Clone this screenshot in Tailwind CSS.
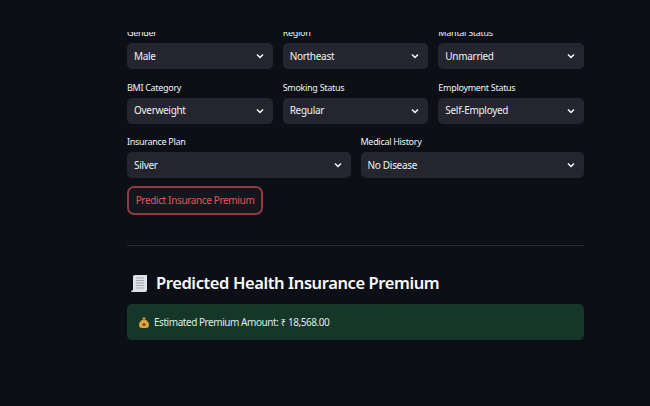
<!DOCTYPE html>
<html lang="en">
<head>
  <meta charset="UTF-8" />
  <title>Health Insurance Premium</title>
  <script src="https://cdn.jsdelivr.net/npm/@tailwindcss/browser@4"></script>
</head>
<body class="bg-[#0c0f15] h-[406px] overflow-hidden font-['Noto_Sans','Lato',sans-serif] text-[#f2f2f2]">
  <main class="w-[457px] ml-[127px] pt-[32px]">
    <div class="h-[374px] overflow-hidden">
      <div class="-mt-[7px] flex flex-col gap-[10.500px]">
        <div class="flex gap-[10px]">
          <div class="flex-1">
            <label class="block h-[18px] leading-[15px] text-[9px] tracking-[-0.3px]">Gender</label>
            <div class="flex items-center justify-between h-[26px] px-[7px] rounded-[5px] bg-[#24252e] text-[10px] tracking-[-0.3px]">
              <span>Male</span>
              <svg class="w-[10px] h-[10px] mr-[1px]" viewBox="0 0 10 10" fill="none" stroke="#fafafa" stroke-width="1.500"><path d="M2 3.500 5 6.500 8 3.500" /></svg>
            </div>
          </div>
          <div class="flex-1">
            <label class="block h-[18px] leading-[15px] text-[9px] tracking-[-0.3px]">Region</label>
            <div class="flex items-center justify-between h-[26px] px-[7px] rounded-[5px] bg-[#24252e] text-[10px] tracking-[-0.3px]">
              <span>Northeast</span>
              <svg class="w-[10px] h-[10px] mr-[1px]" viewBox="0 0 10 10" fill="none" stroke="#fafafa" stroke-width="1.500"><path d="M2 3.500 5 6.500 8 3.500" /></svg>
            </div>
          </div>
          <div class="flex-1">
            <label class="block h-[18px] leading-[15px] text-[9px] tracking-[-0.3px]">Marital Status</label>
            <div class="flex items-center justify-between h-[26px] px-[7px] rounded-[5px] bg-[#24252e] text-[10px] tracking-[-0.3px]">
              <span>Unmarried</span>
              <svg class="w-[10px] h-[10px] mr-[1px]" viewBox="0 0 10 10" fill="none" stroke="#fafafa" stroke-width="1.500"><path d="M2 3.500 5 6.500 8 3.500" /></svg>
            </div>
          </div>
        </div>
        <div class="flex gap-[10px]">
          <div class="flex-1">
            <label class="block h-[18px] leading-[15px] text-[9px] tracking-[-0.3px]">BMI Category</label>
            <div class="flex items-center justify-between h-[26px] px-[7px] rounded-[5px] bg-[#24252e] text-[10px] tracking-[-0.3px]">
              <span>Overweight</span>
              <svg class="w-[10px] h-[10px] mr-[1px]" viewBox="0 0 10 10" fill="none" stroke="#fafafa" stroke-width="1.500"><path d="M2 3.500 5 6.500 8 3.500" /></svg>
            </div>
          </div>
          <div class="flex-1">
            <label class="block h-[18px] leading-[15px] text-[9px] tracking-[-0.3px]">Smoking Status</label>
            <div class="flex items-center justify-between h-[26px] px-[7px] rounded-[5px] bg-[#24252e] text-[10px] tracking-[-0.3px]">
              <span>Regular</span>
              <svg class="w-[10px] h-[10px] mr-[1px]" viewBox="0 0 10 10" fill="none" stroke="#fafafa" stroke-width="1.500"><path d="M2 3.500 5 6.500 8 3.500" /></svg>
            </div>
          </div>
          <div class="flex-1">
            <label class="block h-[18px] leading-[15px] text-[9px] tracking-[-0.3px]">Employment Status</label>
            <div class="flex items-center justify-between h-[26px] px-[7px] rounded-[5px] bg-[#24252e] text-[10px] tracking-[-0.3px]">
              <span>Self-Employed</span>
              <svg class="w-[10px] h-[10px] mr-[1px]" viewBox="0 0 10 10" fill="none" stroke="#fafafa" stroke-width="1.500"><path d="M2 3.500 5 6.500 8 3.500" /></svg>
            </div>
          </div>
        </div>
        <div class="flex gap-[10px]">
          <div class="flex-1">
            <label class="block h-[18px] leading-[15px] text-[9px] tracking-[-0.3px]">Insurance Plan</label>
            <div class="flex items-center justify-between h-[26px] px-[7px] rounded-[5px] bg-[#24252e] text-[10px] tracking-[-0.3px]">
              <span>Silver</span>
              <svg class="w-[10px] h-[10px] mr-[1px]" viewBox="0 0 10 10" fill="none" stroke="#fafafa" stroke-width="1.500"><path d="M2 3.500 5 6.500 8 3.500" /></svg>
            </div>
          </div>
          <div class="flex-1">
            <label class="block h-[18px] leading-[15px] text-[9px] tracking-[-0.3px]">Medical History</label>
            <div class="flex items-center justify-between h-[26px] px-[7px] rounded-[5px] bg-[#24252e] text-[10px] tracking-[-0.3px]">
              <span>No Disease</span>
              <svg class="w-[10px] h-[10px] mr-[1px]" viewBox="0 0 10 10" fill="none" stroke="#fafafa" stroke-width="1.500"><path d="M2 3.500 5 6.500 8 3.500" /></svg>
            </div>
          </div>
        </div>
      </div>

      <button class="block mt-[8px] h-[29px] w-[136px] rounded-[7px] border-[2.500px] border-[#8f3a45] bg-[#14161e] text-[10px] tracking-[-0.36px] text-[#e8535b]">Predict Insurance Premium</button>

      <div class="mt-[30px] h-px bg-[#262a33]"></div>

      <h2 class="mt-[23px] flex items-center gap-[8px] h-[28px] text-[16.500px] tracking-[-0.4px] font-semibold text-[#fafafa]">
        <svg class="ml-[4px] w-[17px] h-[19px]" viewBox="0 0 17 19">
          <path d="M4 1h12v15q0 2-2 2H1q-1 0-1-1l2-1V3q0-2 2-2z" fill="#dfe3e6" />
          <path d="M5 4h8M5 6.500h8M5 9h8M5 11.500h8M5 14h8" stroke="#a2a8ad" stroke-width="1" />
        </svg>
        <span>Predicted Health Insurance Premium</span>
      </h2>

      <div class="mt-[7px] flex items-center gap-[5px] h-[36px] px-[12px] rounded-[5px] bg-[#16362a] text-[10px] tracking-[-0.45px] text-[#dcefe2]">
        <svg class="w-[10px] h-[11px]" viewBox="0 0 10 11">
          <path d="M3.500 0.500h3L6 2.500q4 2 4 5.500 0 3-3 3H3q-3 0-3-3 0-3.500 4-5.500z" fill="#e0a33e" />
          <path d="M3.500 2.600h3" stroke="#8a5a20" stroke-width="0.800" />
          <circle cx="5" cy="7.500" r="1.600" fill="#7a4a18" />
        </svg>
        <span>Estimated Premium Amount: ₹ 18,568.00</span>
      </div>
    </div>
  </main>
</body>
</html>
